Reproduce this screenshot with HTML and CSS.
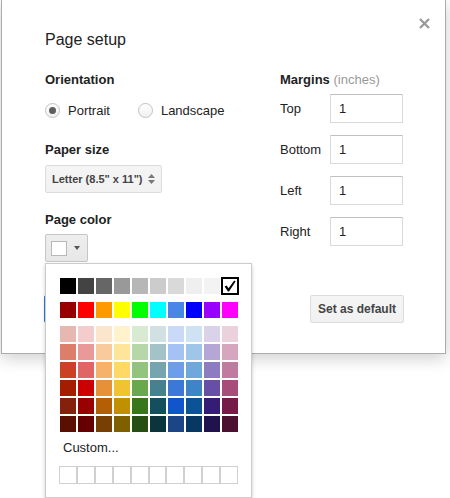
FILE: index.html
```html
<!DOCTYPE html>
<html>
<head>
<meta charset="utf-8">
<title>Page setup</title>
<link rel="stylesheet" href="styles.css">
</head>
<body>
<div class="dialog">
  <div class="header">
    <div class="title">Page setup</div>
    <div class="close" aria-label="Close">
      <svg width="11" height="11" viewBox="0 0 11 11"><path d="M1 1L10 10M10 1L1 10" stroke="#999" stroke-width="2.3" fill="none"/></svg>
    </div>
  </div>
  <div class="cols">
    <div class="col-left">
      <div class="label">Orientation</div>
      <div class="radios">
        <div class="radio-opt"><span class="radio checked"></span><span>Portrait</span></div>
        <div class="radio-opt"><span class="radio"></span><span>Landscape</span></div>
      </div>
      <div class="label label-paper">Paper size</div>
      <div class="select">
        <span>Letter (8.5" x 11")</span>
        <svg width="7" height="10" viewBox="0 0 7 10"><path d="M0 4L3.5 0L7 4Z M0 6L7 6L3.5 10Z" fill="#777"/></svg>
      </div>
      <div class="label label-color">Page color</div>
      <div class="color-wrap">
        <div class="color-btn"><span class="color-square"></span><span class="caret"></span></div>
        <div class="palette">
          <div class="pal-row">
            <span class="sw" style="background:#000000"></span>
            <span class="sw" style="background:#434343"></span>
            <span class="sw" style="background:#666666"></span>
            <span class="sw" style="background:#999999"></span>
            <span class="sw" style="background:#b7b7b7"></span>
            <span class="sw" style="background:#cccccc"></span>
            <span class="sw" style="background:#d9d9d9"></span>
            <span class="sw" style="background:#efefef"></span>
            <span class="sw" style="background:#f3f3f3"></span>
            <span class="sw selected"><svg width="12" height="12" viewBox="0 0 12 12"><path d="M0.6 6.6L2.6 5.4L4.6 8.2L10.2 0.6L11.6 1.6L5 11.4L4 11.4Z" fill="#000"/></svg></span>
          </div>
          <div class="pal-row">
            <span class="sw" style="background:#980000"></span>
            <span class="sw" style="background:#ff0000"></span>
            <span class="sw" style="background:#ff9900"></span>
            <span class="sw" style="background:#ffff00"></span>
            <span class="sw" style="background:#00ff00"></span>
            <span class="sw" style="background:#00ffff"></span>
            <span class="sw" style="background:#4a86e8"></span>
            <span class="sw" style="background:#0000ff"></span>
            <span class="sw" style="background:#9900ff"></span>
            <span class="sw" style="background:#ff00ff"></span>
          </div>
          <div class="pal-grid">
            <span class="sw" style="background:#e6b8af"></span>
            <span class="sw" style="background:#f4cccc"></span>
            <span class="sw" style="background:#fce5cd"></span>
            <span class="sw" style="background:#fff2cc"></span>
            <span class="sw" style="background:#d9ead3"></span>
            <span class="sw" style="background:#d0e0e3"></span>
            <span class="sw" style="background:#c9daf8"></span>
            <span class="sw" style="background:#cfe2f3"></span>
            <span class="sw" style="background:#d9d2e9"></span>
            <span class="sw" style="background:#ead1dc"></span>
            <span class="sw" style="background:#dd7e6b"></span>
            <span class="sw" style="background:#ea9999"></span>
            <span class="sw" style="background:#f9cb9c"></span>
            <span class="sw" style="background:#ffe599"></span>
            <span class="sw" style="background:#b6d7a8"></span>
            <span class="sw" style="background:#a2c4c9"></span>
            <span class="sw" style="background:#a4c2f4"></span>
            <span class="sw" style="background:#9fc5e8"></span>
            <span class="sw" style="background:#b4a7d6"></span>
            <span class="sw" style="background:#d5a6bd"></span>
            <span class="sw" style="background:#cc4125"></span>
            <span class="sw" style="background:#e06666"></span>
            <span class="sw" style="background:#f6b26b"></span>
            <span class="sw" style="background:#ffd966"></span>
            <span class="sw" style="background:#93c47d"></span>
            <span class="sw" style="background:#76a5af"></span>
            <span class="sw" style="background:#6d9eeb"></span>
            <span class="sw" style="background:#6fa8dc"></span>
            <span class="sw" style="background:#8e7cc3"></span>
            <span class="sw" style="background:#c27ba0"></span>
            <span class="sw" style="background:#a61c00"></span>
            <span class="sw" style="background:#cc0000"></span>
            <span class="sw" style="background:#e69138"></span>
            <span class="sw" style="background:#f1c232"></span>
            <span class="sw" style="background:#6aa84f"></span>
            <span class="sw" style="background:#45818e"></span>
            <span class="sw" style="background:#3c78d8"></span>
            <span class="sw" style="background:#3d85c6"></span>
            <span class="sw" style="background:#674ea7"></span>
            <span class="sw" style="background:#a64d79"></span>
            <span class="sw" style="background:#85200c"></span>
            <span class="sw" style="background:#990000"></span>
            <span class="sw" style="background:#b45f06"></span>
            <span class="sw" style="background:#bf9000"></span>
            <span class="sw" style="background:#38761d"></span>
            <span class="sw" style="background:#134f5c"></span>
            <span class="sw" style="background:#1155cc"></span>
            <span class="sw" style="background:#0b5394"></span>
            <span class="sw" style="background:#351c75"></span>
            <span class="sw" style="background:#741b47"></span>
            <span class="sw" style="background:#5b0f00"></span>
            <span class="sw" style="background:#660000"></span>
            <span class="sw" style="background:#783f04"></span>
            <span class="sw" style="background:#7f6000"></span>
            <span class="sw" style="background:#274e13"></span>
            <span class="sw" style="background:#0c343d"></span>
            <span class="sw" style="background:#1c4587"></span>
            <span class="sw" style="background:#073763"></span>
            <span class="sw" style="background:#20124d"></span>
            <span class="sw" style="background:#4c1130"></span>
          </div>
          <div class="custom-label">Custom...</div>
          <div class="custom-row">
            <span class="custom-cell"></span><span class="custom-cell"></span><span class="custom-cell"></span><span class="custom-cell"></span><span class="custom-cell"></span>
            <span class="custom-cell"></span><span class="custom-cell"></span><span class="custom-cell"></span><span class="custom-cell"></span><span class="custom-cell"></span>
          </div>
        </div>
      </div>
    </div>
    <div class="col-right">
      <div class="label">Margins <span class="muted">(inches)</span></div>
      <div class="margins">
        <div class="m-label">Top</div><input class="m-input" type="text" value="1">
        <div class="m-label">Bottom</div><input class="m-input" type="text" value="1">
        <div class="m-label">Left</div><input class="m-input" type="text" value="1">
        <div class="m-label">Right</div><input class="m-input" type="text" value="1">
      </div>
    </div>
  </div>
  <div class="buttons">
    <div class="btn btn-primary">OK</div>
    <div class="btn">Cancel</div>
    <div class="btn btn-default">Set as default</div>
  </div>
</div>
</body>
</html>
```
FILE: styles.css
```css
html {
  height: 100%;
}

body {
  margin: 0;
  min-height: 498px;
  background: #fff;
  font-family: "Liberation Sans", Arial, sans-serif;
  color: #222;
}

.dialog {
  box-sizing: border-box;
  width: 445px;
  height: 354px;
  margin-left: 1px;
  border: 1px solid #acacac;
  border-top: none;
  background: #fff;
  box-shadow: 0 4px 16px rgba(0, 0, 0, 0.2);
  padding: 18px 15px 0 43px;
}

.header {
  display: flex;
  justify-content: space-between;
  align-items: flex-start;
}

.title {
  margin-top: 12px;
  font-size: 16px;
  line-height: 20px;
  color: #222;
}

.close {
  width: 11px;
  height: 11px;
  display: flex;
}

.cols {
  display: grid;
  grid-template-columns: 235px 1fr;
  padding-top: 22px;
}

.label {
  font-size: 13px;
  line-height: 16px;
  font-weight: bold;
  color: #222;
}

.muted {
  font-weight: normal;
  color: #999;
}

.radios {
  display: flex;
  gap: 28px;
  margin-top: 14px;
  height: 17px;
  align-items: center;
  font-size: 13px;
  line-height: 17px;
}

.radio-opt {
  display: flex;
  align-items: center;
  gap: 8px;
}

.radio {
  box-sizing: border-box;
  width: 15px;
  height: 15px;
  border-radius: 50%;
  border: 1px solid #c2c2c2;
  background: linear-gradient(#ffffff, #f0f0f0);
  display: flex;
  align-items: center;
  justify-content: center;
}

.radio.checked::after {
  content: "";
  width: 7px;
  height: 7px;
  border-radius: 50%;
  background: #5f5f5f;
}

.label-paper {
  margin-top: 23px;
}

.select {
  box-sizing: border-box;
  width: 117px;
  height: 28px;
  margin-top: 7px;
  display: flex;
  align-items: center;
  justify-content: space-between;
  padding: 0 6px 0 6px;
  border: 1px solid #dcdcdc;
  border-radius: 2px;
  background: linear-gradient(#f5f5f5, #f1f1f1);
  font-size: 11px;
  font-weight: bold;
  color: #444;
}

.label-color {
  margin-top: 19px;
}

.color-wrap {
  position: relative;
  margin-top: 6px;
  width: 43px;
}

.color-btn {
  box-sizing: border-box;
  width: 43px;
  height: 28px;
  display: flex;
  align-items: center;
  padding-left: 5px;
  gap: 7px;
  border: 1px solid #c6c6c6;
  border-radius: 2px;
  background: linear-gradient(#eeeeee, #e7e7e7);
}

.color-square {
  box-sizing: border-box;
  width: 16px;
  height: 15px;
  border: 1px solid #b8b8b8;
  background: #fff;
}

.caret {
  width: 0;
  height: 0;
  border-left: 3.5px solid transparent;
  border-right: 3.5px solid transparent;
  border-top: 4px solid #555;
}

.palette {
  position: absolute;
  left: 0;
  top: 29px;
  z-index: 2;
  box-sizing: border-box;
  width: 207px;
  padding: 14px 13px 13px 14px;
  border: 1px solid #ccc;
  background: #fff;
  box-shadow: 0 2px 4px rgba(0, 0, 0, 0.2);
}

.pal-row {
  display: flex;
  gap: 2px;
}

.pal-row + .pal-row {
  margin-top: 8px;
}

.pal-grid {
  display: grid;
  grid-template-columns: repeat(10, 16px);
  gap: 2px;
  margin-top: 8px;
}

.sw {
  display: block;
  width: 16px;
  height: 16px;
}

.sw.selected {
  box-sizing: border-box;
  border: 1px solid #000;
  box-shadow: 0 0 0 1px #000;
  background: #fff;
  display: flex;
  align-items: center;
  justify-content: center;
}

.custom-label {
  margin-top: 8px;
  padding-left: 3px;
  font-size: 13px;
  line-height: 16px;
  color: #222;
}

.custom-row {
  display: flex;
  margin-top: 10px;
  margin-left: -1px;
}

.custom-cell {
  box-sizing: border-box;
  width: 18px;
  height: 18px;
  border: 1px solid #d0d0d0;
  background: #fff;
}

.margins {
  display: grid;
  grid-template-columns: 50px 73px;
  row-gap: 12px;
  margin-top: 6px;
  align-items: center;
}

.m-label {
  font-size: 13px;
  line-height: 16px;
  color: #222;
}

.m-input {
  box-sizing: border-box;
  width: 73px;
  height: 29px;
  margin: 0;
  border: 1px solid #d9d9d9;
  border-top-color: #c0c0c0;
  border-radius: 1px;
  padding: 0 0 0 8px;
  font-family: inherit;
  font-size: 13px;
  color: #222;
  background: #fff;
  outline: none;
}

.buttons {
  display: flex;
  gap: 16px;
  margin-top: 33px;
  margin-right: 26px;
  margin-left: -1px;
}

.btn {
  box-sizing: border-box;
  height: 28px;
  padding: 0 7px;
  display: flex;
  align-items: center;
  border: 1px solid #dcdcdc;
  border-radius: 2px;
  background: linear-gradient(#f5f5f5, #f1f1f1);
  font-size: 12px;
  font-weight: bold;
  color: #444;
}

.btn-primary {
  min-width: 54px;
  justify-content: center;
  background: linear-gradient(#4d90fe, #4787ed);
  border-color: #3079ed;
  color: #fff;
}

.btn-default {
  margin-left: auto;
}
```
